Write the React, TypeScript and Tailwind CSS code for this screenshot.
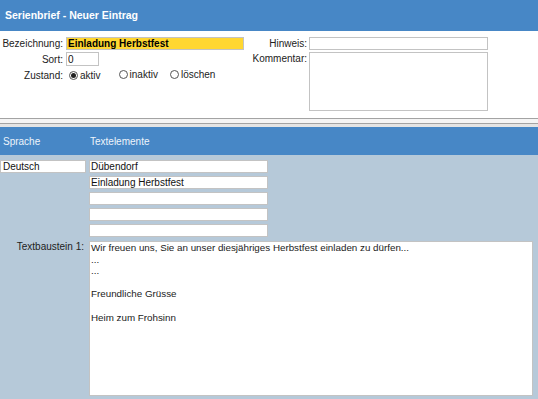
const inputCls =
  "h-[13px] border border-[#c3c3c3] px-[1px] text-[10px] leading-[11px] text-[#111] outline-none";

function Radio({ label, checked }: { label: string; checked?: boolean }) {
  return (
    <span className="inline-flex items-center gap-[2px]">
      <span className="flex h-[9px] w-[9px] items-center justify-center rounded-full border border-[#555] bg-white">
        {checked && <span className="h-[5px] w-[5px] rounded-full bg-[#222]" />}
      </span>
      <span>{label}</span>
    </span>
  );
}

export default function App() {
  return (
    <div className="flex h-[399px] w-[538px] flex-col overflow-hidden bg-[#b6c9d9] font-['Liberation_Sans',Arial,sans-serif] text-[10px] text-[#222]">
      <div className="flex h-[31px] items-center bg-[#4787c6] px-[5px] text-[10.5px] font-bold text-white">
        Serienbrief - Neuer Eintrag
      </div>

      <div className="flex h-[87px] bg-white pt-[6px] leading-[13px]">
        <div className="grid grid-cols-[63px_178px] content-start items-center gap-x-[3px] gap-y-[2px]">
          <span className="text-right">Bezeichnung:</span>
          <input
            readOnly
            defaultValue="Einladung Herbstfest"
            className={inputCls + " w-[178px] bg-[#ffd731] font-bold text-black"}
          />
          <span className="text-right">Sort:</span>
          <input readOnly defaultValue="0" className={inputCls + " h-[14px] w-[33px] bg-white"} />
          <span className="text-right">Zustand:</span>
          <div className="flex items-center pl-[3px]">
            <Radio label="aktiv" checked />
            <span className="ml-[18px]">
              <Radio label="inaktiv" />
            </span>
            <span className="ml-[12px]">
              <Radio label="löschen" />
            </span>
          </div>
        </div>
        <div className="grid grid-cols-[63px_179px] content-start items-start gap-x-[2px] gap-y-[2px]">
          <span className="text-right">Hinweis:</span>
          <input readOnly className={inputCls + " w-[179px] bg-white"} />
          <span className="text-right">Kommentar:</span>
          <textarea readOnly className="h-[59px] w-[179px] resize-none border border-[#c3c3c3] bg-white outline-none" />
        </div>
      </div>

      <div className="h-[1px] bg-[#a3a3a3]" />
      <div className="h-[4px] bg-[#f4f4f4]" />
      <div className="h-[1px] bg-[#a3a3a3]" />
      <div className="h-[3px] bg-[#e4e4e4]" />

      <div className="flex h-[28px] items-center bg-[#4787c6] text-[10px] text-[#eef4fb]">
        <span className="w-[90px] pl-[3px]">Sprache</span>
        <span>Textelemente</span>
      </div>

      <div className="flex flex-col pt-[5px]">
        <div className="flex gap-[3px]">
          <input readOnly defaultValue="Deutsch" className={inputCls + " w-[86px] bg-white pl-[2px]"} />
          <div className="flex flex-col gap-[3px]">
            <input readOnly defaultValue="Dübendorf" className={inputCls + " w-[179px] bg-white"} />
            <input readOnly defaultValue="Einladung Herbstfest" className={inputCls + " w-[179px] bg-white"} />
            <input readOnly className={inputCls + " w-[179px] bg-white"} />
            <input readOnly className={inputCls + " w-[179px] bg-white"} />
            <input readOnly className={inputCls + " w-[179px] bg-white"} />
          </div>
        </div>
        <div className="mt-[4px] flex gap-[3px]">
          <span className="w-[86px] pr-[2px] text-right leading-[11.7px]">Textbaustein 1:</span>
          <textarea
            readOnly
            defaultValue={
              "Wir freuen uns, Sie an unser diesjähriges Herbstfest einladen zu dürfen...\n...\n...\n\nFreundliche Grüsse\n\nHeim zum Frohsinn"
            }
            className="h-[155px] w-[444px] resize-none overflow-hidden border border-[#c3c3c3] bg-white px-[1px] pt-0 text-[9.8px] leading-[11.6px] text-[#222] outline-none"
          />
        </div>
      </div>
    </div>
  );
}
